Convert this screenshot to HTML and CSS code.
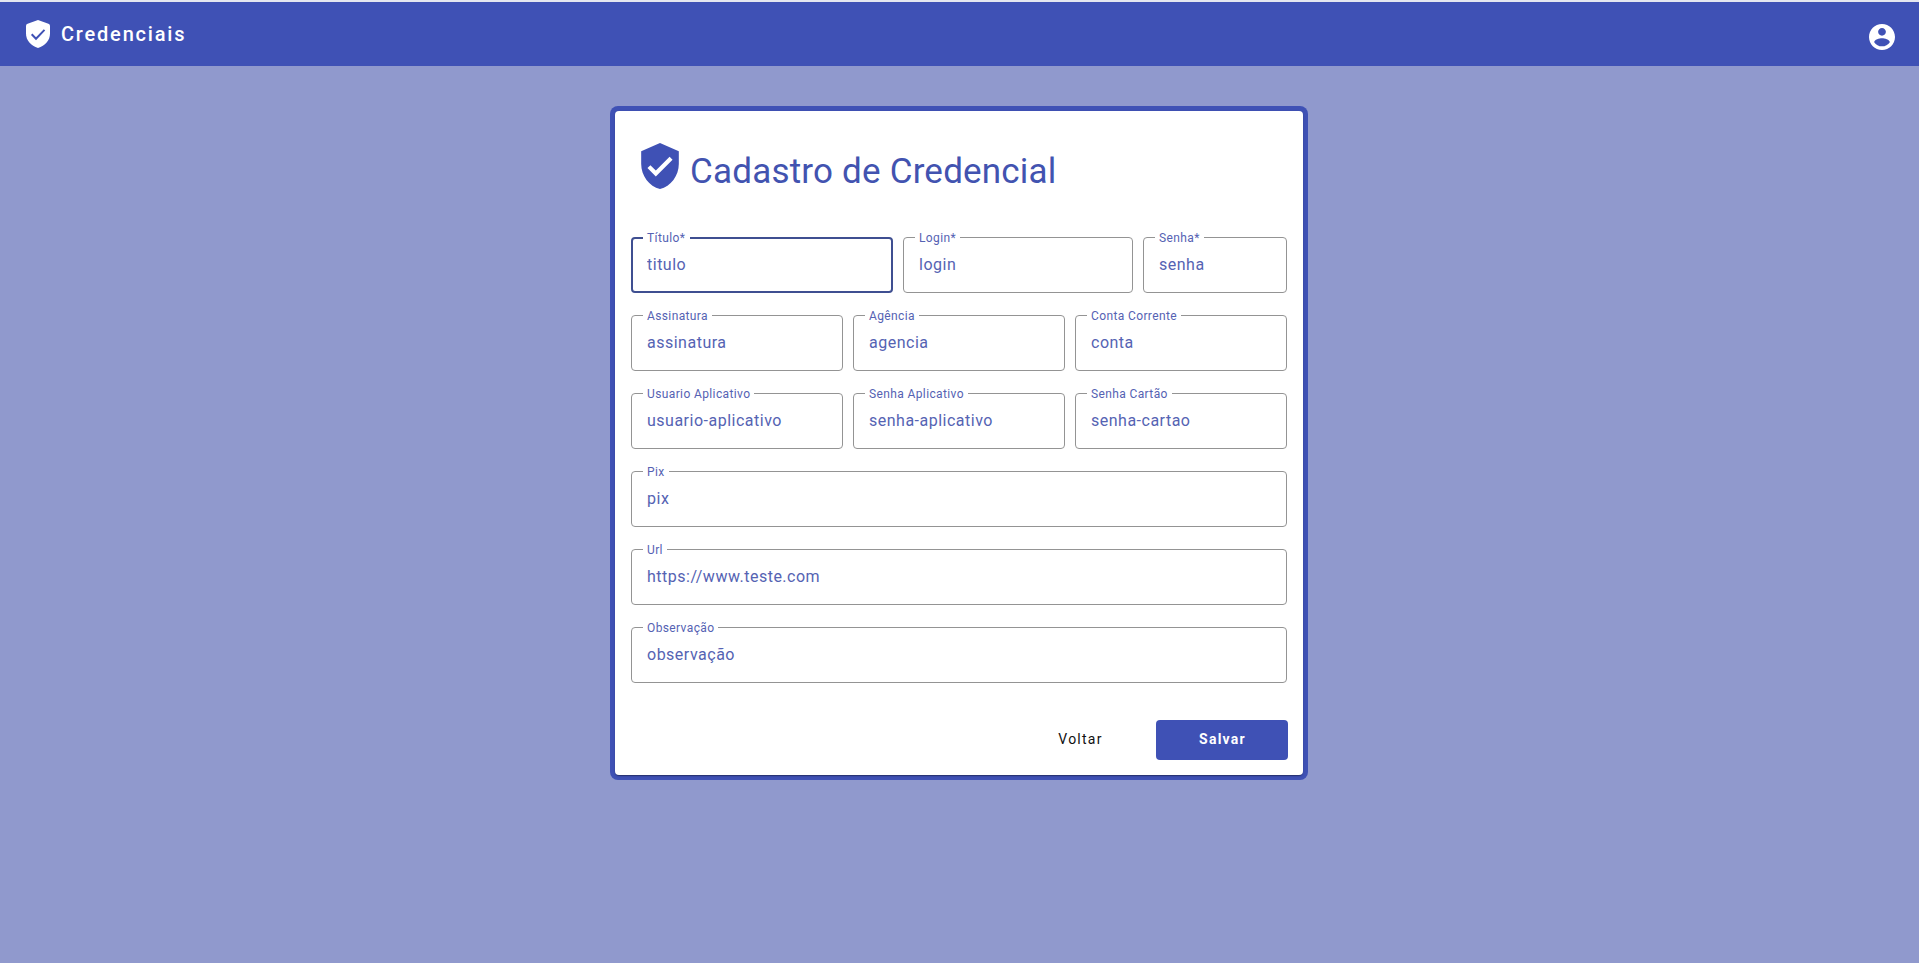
FILE: index.html
```html
<!DOCTYPE html>
<html lang="pt-BR">
<head>
<meta charset="utf-8">
<title>Credenciais</title>
<link rel="stylesheet" href="styles.css">
</head>
<body>
<header class="toolbar">
  <div class="brand">
    <svg class="brand-icon" viewBox="0 0 24 28"><path fill="#fff" d="M12 0l10.400 3.700Q24 4.300 24 6v7.500C24 20.500 19 25.800 12 28 5 25.800 0 20.500 0 13.500V6Q0 4.300 1.600 3.700z"/><path fill="none" stroke="#3f51b5" stroke-width="2" d="M5.700 14.300l4.300 4.400 8.500-8.800"/></svg>
    <span class="brand-name">Credenciais</span>
  </div>
  <svg class="account-icon" viewBox="2 2 20 20"><path fill="#fff" d="M12 2C6.480 2 2 6.480 2 12s4.480 10 10 10 10-4.480 10-10S17.520 2 12 2zm0 3c1.660 0 3 1.340 3 3s-1.340 3-3 3-3-1.340-3-3 1.340-3 3-3zm0 14.200c-2.500 0-4.710-1.280-6-3.220.03-1.990 4-3.080 6-3.080 1.990 0 5.970 1.090 6 3.080-1.290 1.940-3.500 3.220-6 3.220z"/></svg>
</header>
<main class="page">
  <div class="frame">
    <form class="card">
      <div class="card-header">
        <svg class="card-icon" viewBox="3 1 18 22"><path fill="#3f51b5" d="M12 1L3 5v6c0 5.550 3.840 10.740 9 12 5.160-1.260 9-6.450 9-12V5l-9-4zm-2 16l-4-4 1.410-1.410L10 14.170l6.590-6.590L18 9l-8 8z"/></svg>
        <h1 class="card-title">Cadastro de Credencial</h1>
      </div>
      <div class="fields">
        <div class="row row-access">
          <label class="field field-focused"><span class="label">Título*</span><input class="input" type="text" value="titulo"></label>
          <label class="field"><span class="label">Login*</span><input class="input" type="text" value="login"></label>
          <label class="field"><span class="label">Senha*</span><input class="input" type="text" value="senha"></label>
        </div>
        <div class="row row-thirds">
          <label class="field"><span class="label">Assinatura</span><input class="input" type="text" value="assinatura"></label>
          <label class="field"><span class="label">Agência</span><input class="input" type="text" value="agencia"></label>
          <label class="field"><span class="label">Conta Corrente</span><input class="input" type="text" value="conta"></label>
        </div>
        <div class="row row-thirds">
          <label class="field"><span class="label">Usuario Aplicativo</span><input class="input" type="text" value="usuario-aplicativo"></label>
          <label class="field"><span class="label">Senha Aplicativo</span><input class="input" type="text" value="senha-aplicativo"></label>
          <label class="field"><span class="label">Senha Cartão</span><input class="input" type="text" value="senha-cartao"></label>
        </div>
        <div class="row">
          <label class="field"><span class="label">Pix</span><input class="input" type="text" value="pix"></label>
        </div>
        <div class="row">
          <label class="field"><span class="label">Url</span><input class="input" type="text" value="https://www.teste.com"></label>
        </div>
        <div class="row">
          <label class="field"><span class="label">Observação</span><input class="input" type="text" value="observação"></label>
        </div>
      </div>
      <div class="actions">
        <button class="button" type="button">Voltar</button>
        <button class="button button-primary" type="button">Salvar</button>
      </div>
    </form>
  </div>
</main>
</body>
</html>
```
FILE: styles.css
```css
* { box-sizing: border-box; }

body {
  margin: 0;
  min-height: 963px;
  border-top: 2px solid #e4e6f0;
  background: #9099cd;
  color: #3f51b5;
  font-family: Roboto, "Liberation Sans", sans-serif;
}

.toolbar {
  display: flex;
  align-items: center;
  justify-content: space-between;
  height: 64px;
  padding: 0 24px 0 26px;
  background: #3f51b5;
}

.brand { display: flex; align-items: center; gap: 11px; }
.brand-icon { width: 24px; height: 28px; }
.brand-name {
  color: #fff;
  font-size: 20px;
  font-weight: 500;
  line-height: 32px;
  letter-spacing: 1.8px;
}
.account-icon { width: 26px; height: 26px; margin-top: 6px; }

.page { display: flex; justify-content: center; padding-top: 40px; }

.frame {
  width: 698px;
  margin-right: 1px;
  padding: 5px;
  border-radius: 8px;
  background: #3f51b5;
}

.card {
  height: 664px;
  padding: 0 16px;
  border-radius: 4px;
  background: #fff;
  box-shadow: 0 2px 1px -1px rgba(0, 0, 0, 0.2), 0 1px 1px rgba(0, 0, 0, 0.14), 0 1px 3px rgba(0, 0, 0, 0.12);
}

.card-header {
  display: flex;
  align-items: flex-start;
  gap: 11px;
  height: 126px;
  padding: 32px 0 0 10px;
}
.card-icon { width: 38px; height: 46px; }
.card-title {
  margin: 9px 0 0;
  color: #4253b0;
  font-size: 35px;
  font-weight: 400;
  line-height: 40px;
  letter-spacing: 0.2px;
}

.fields { display: grid; gap: 22px; }
.row { display: grid; gap: 10px; }
.row-access { grid-template-columns: 262px 230px 144px; }
.row-thirds { grid-template-columns: repeat(3, 212px); }

.field {
  position: relative;
  display: flex;
  height: 56px;
  border: 1px solid #949494;
  border-radius: 4px;
}
.field-focused { border: 2px solid #3f4f91; }

.label {
  position: absolute;
  top: -8px;
  left: 11px;
  padding: 0 4px;
  background: #fff;
  color: #5562b3;
  font-size: 12px;
  line-height: 16px;
  letter-spacing: 0.38px;
}
.field-focused .label { top: -9px; left: 10px; padding-right: 5px; }

.input {
  width: 100%;
  height: 24px;
  margin-top: 15px;
  padding: 0 15px;
  border: 0;
  background: none;
  outline: 0;
  color: #5563b3;
  font: 400 16px/24px Roboto, "Liberation Sans", sans-serif;
  letter-spacing: 0.5px;
}
.field-focused .input { margin-top: 14px; padding: 0 14px; }

.actions {
  display: flex;
  justify-content: flex-end;
  gap: 10px;
  margin: 37px -1px 0 0;
}
.button {
  width: 132px;
  height: 40px;
  padding: 0 0 2px 1px;
  border: 0;
  border-radius: 4px;
  background: none;
  color: #111;
  font: 400 14px/20px Roboto, "Liberation Sans", sans-serif;
  letter-spacing: 1.25px;
}
.button-primary { background: #3f51b5; color: #fff; font-weight: 700; }
```
